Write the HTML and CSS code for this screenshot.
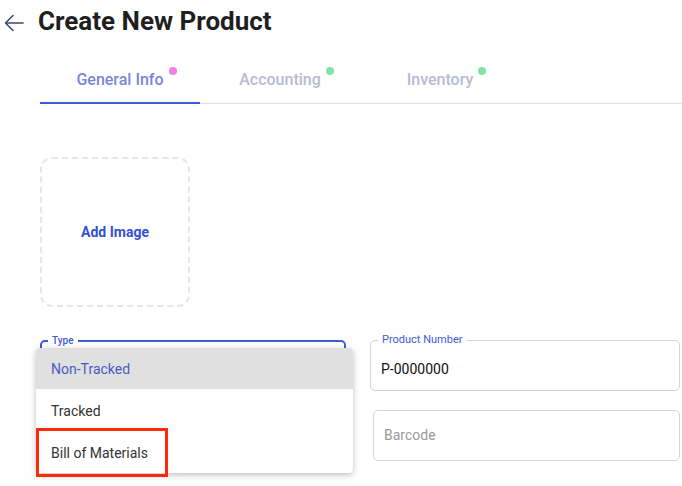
FILE: index.html
```html
<!DOCTYPE html>
<html lang="en">

<head>
    <meta charset="UTF-8">
    <meta name="viewport" content="width=device-width, initial-scale=1.0">
    <title>Create New Product</title>
    <link rel="stylesheet" href="styles.css">
</head>

<body>
    <div class="header">
        <svg class="back" width="20" height="20" viewBox="0 0 20 20" fill="none" stroke="#3d4a6b" stroke-width="1.6" stroke-linecap="round" stroke-linejoin="round">
            <path d="M19 10H2" />
            <path d="M9 2.5L1.5 10L9 17.5" />
        </svg>
        <h1 class="title">Create New Product</h1>
    </div>

    <div class="tabs">
        <div class="tab active"><span class="tab-label">General Info<span class="dot pink"></span></span></div>
        <div class="tab"><span class="tab-label">Accounting<span class="dot green"></span></span></div>
        <div class="tab"><span class="tab-label">Inventory<span class="dot green"></span></span></div>
    </div>

    <div class="content">
        <div class="add-image">Add Image</div>

        <div class="fields">
            <div class="field focused">
                <span class="field-label">Type</span>
                <div class="menu">
                    <div class="menu-item selected">Non-Tracked</div>
                    <div class="menu-item">Tracked</div>
                    <div class="menu-item">Bill of Materials</div>
                    <div class="highlight"></div>
                </div>
            </div>
            <div class="field">
                <span class="field-label">Product Number</span>
                <span class="field-value">P-0000000</span>
            </div>
            <div></div>
            <div class="field barcode">
                <span class="field-placeholder">Barcode</span>
            </div>
        </div>
    </div>
</body>

</html>
```

FILE: styles.css
```css
body {
    margin: 0;
    min-height: 486px;
    font-family: Roboto, 'Liberation Sans', sans-serif;
    background-color: #FFFFFF;
    color: #1f1f1f;
}

.header {
    display: flex;
    align-items: center;
    height: 42px;
    padding-left: 4px;
}

.back {
    display: block;
    margin-top: 3px;
}

.title {
    margin: 0 0 0 14px;
    font-size: 26px;
    font-weight: 700;
    line-height: 40px;
    color: #1f1f1f;
}

.tabs {
    display: flex;
    margin: 16px 0 0 40px;
    border-bottom: 1px solid #e0e0e6;
}

.tab {
    width: 160px;
    height: 44px;
    line-height: 44px;
    text-align: center;
    font-size: 16px;
    font-weight: 500;
    color: #b9b9d3;
    border-bottom: 2px solid transparent;
    margin-bottom: -1px;
}

.tab.active {
    color: #7a86d8;
    border-bottom-color: #3d5bd9;
}

.tab-label {
    position: relative;
}

.dot {
    position: absolute;
    right: -13px;
    top: -3px;
    width: 8px;
    height: 8px;
    border-radius: 50%;
}

.dot.pink {
    background-color: #f07ee6;
}

.dot.green {
    background-color: #82e4a8;
}

.content {
    padding-left: 40px;
    padding-bottom: 40px;
}

.add-image {
    box-sizing: border-box;
    width: 150px;
    height: 150px;
    margin-top: 53px;
    border: 2px dashed #e3e5f4;
    border-radius: 12px;
    display: flex;
    align-items: center;
    justify-content: center;
    font-size: 14px;
    font-weight: 700;
    color: #3451d1;
}

.fields {
    display: grid;
    grid-template-columns: 306px 310px;
    column-gap: 24px;
    row-gap: 19px;
    margin-top: 33px;
}

.field {
    position: relative;
    box-sizing: border-box;
    height: 51px;
    border: 1px solid #d4d4d8;
    border-radius: 5px;
    display: flex;
    align-items: center;
    padding-left: 10px;
}

.field.focused {
    border: 2px solid #3d5bd9;
}

.field.barcode {
    margin-left: 3px;
    width: 307px;
}

.field-label {
    position: absolute;
    top: -7px;
    left: 7px;
    padding: 0 4px;
    background-color: #FFFFFF;
    font-size: 11px;
    line-height: 12px;
    color: #3d5bd9;
}

.field.focused .field-label {
    left: 6px;
    font-size: 10px;
    font-weight: 500;
}

.field-value {
    font-size: 14px;
    color: #111111;
    margin-top: 6px;
}

.field-placeholder {
    font-size: 14px;
    color: #9a9a9a;
    margin-top: -2px;
}

.menu {
    position: absolute;
    top: 6px;
    left: -6px;
    width: 317px;
    background-color: #FFFFFF;
    border-radius: 4px;
    box-shadow: 0 2px 6px rgba(0, 0, 0, 0.25);
    z-index: 2;
}

.menu-item {
    height: 42px;
    line-height: 44px;
    padding-left: 15px;
    font-size: 14px;
    color: #333333;
}

.menu-item.selected {
    background-color: #e0e0e0;
    color: #4a5bc4;
    border-radius: 4px 4px 0 0;
    height: 41px;
    line-height: 43px;
}

.menu-item:last-of-type {
    margin-bottom: 1px;
}

.highlight {
    position: absolute;
    left: 0;
    top: 80px;
    width: 132px;
    height: 49px;
    box-sizing: border-box;
    border: 3px solid #ff2a0a;
}
```
